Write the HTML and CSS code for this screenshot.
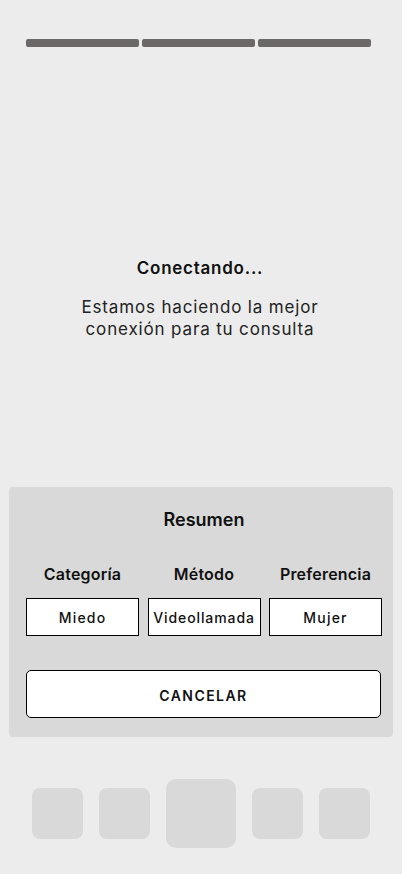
FILE: index.html
```html
<!DOCTYPE html>
<html lang="es">
<head>
    <meta charset="UTF-8">
    <title>Conectando</title>
    <link rel="stylesheet" href="styles.css">
</head>
<body>
    <div class="page">
        <div class="progress">
            <span class="bar"></span>
            <span class="bar"></span>
            <span class="bar"></span>
        </div>

        <div class="message">
            <h1 class="title">Conectando...</h1>
            <p class="text">Estamos haciendo la mejor<br>conexión para tu consulta</p>
        </div>

        <div class="summary">
            <h2 class="summary-title">Resumen</h2>
            <div class="cols">
                <div class="col">
                    <div class="label">Categoría</div>
                    <div class="value">Miedo</div>
                </div>
                <div class="col">
                    <div class="label">Método</div>
                    <div class="value value-tight">Videollamada</div>
                </div>
                <div class="col">
                    <div class="label">Preferencia</div>
                    <div class="value">Mujer</div>
                </div>
            </div>
            <button class="cancel">CANCELAR</button>
        </div>

        <div class="nav">
            <span class="nav-item"></span>
            <span class="nav-item"></span>
            <span class="nav-item nav-main"></span>
            <span class="nav-item"></span>
            <span class="nav-item"></span>
        </div>
    </div>
</body>
</html>
```

FILE: styles.css
```css
*{
    margin:0;
    padding:0;
    box-sizing: border-box;
}
body{
    background-color: #ececec;
    font-family: Inter, "Noto Sans", sans-serif;
    color: #111;
}
.page{
    width: 402px;
    height: 874px;
}
.progress{
    display: flex;
    gap: 3px;
    padding: 39px 31px 0 26px;
}
.bar{
    flex: 1;
    height: 8px;
    border-radius: 2px;
    background-color: #6d6868;
}
.message{
    margin-top: 210px;
    padding-right: 2px;
    text-align: center;
}
.title{
    font-size: 17px;
    font-weight: 600;
    line-height: 22px;
    letter-spacing: 0.75px;
}
.text{
    margin-top: 17px;
    font-size: 17px;
    line-height: 22px;
    font-weight: 400;
    letter-spacing: 0.85px;
    color: #222;
}
.summary{
    margin: 147px 9px 0 9px;
    padding: 22px 11px 19px 17px;
    background-color: #d9d9d9;
    border-radius: 4px;
}
.summary-title{
    text-align: center;
    font-size: 18px;
    font-weight: 600;
    line-height: 22px;
}
.cols{
    display: grid;
    grid-template-columns: 1fr 1fr 1fr;
    gap: 8.5px;
    margin-top: 33px;
}
.col{
    display: flex;
    flex-direction: column;
    align-items: stretch;
}
.label{
    text-align: center;
    font-size: 16px;
    font-weight: 600;
    line-height: 20px;
    letter-spacing: 0.2px;
}
.value{
    margin-top: 14px;
    height: 38px;
    border: 1px solid #000;
    background-color: #fff;
    display: flex;
    align-items: center;
    justify-content: center;
    font-size: 14px;
    font-weight: 500;
    letter-spacing: 1.2px;
}
.value-tight{
    letter-spacing: 0.9px;
}
.cancel{
    display: block;
    width: 355px;
    height: 48px;
    margin-top: 34px;
    padding-top: 2px;
    border: 1px solid #000;
    border-radius: 5px;
    background-color: #fff;
    font-family: Inter, "Noto Sans", sans-serif;
    font-size: 14px;
    font-weight: 600;
    letter-spacing: 1.45px;
    color: #111;
    cursor: pointer;
}
.nav{
    display: flex;
    justify-content: center;
    align-items: center;
    gap: 16px;
    margin-top: 42px;
}
.nav-item{
    width: 51px;
    height: 51px;
    border-radius: 8px;
    background-color: #d9d9d9;
}
.nav-main{
    width: 70px;
    height: 69px;
    border-radius: 10px;
}
```
